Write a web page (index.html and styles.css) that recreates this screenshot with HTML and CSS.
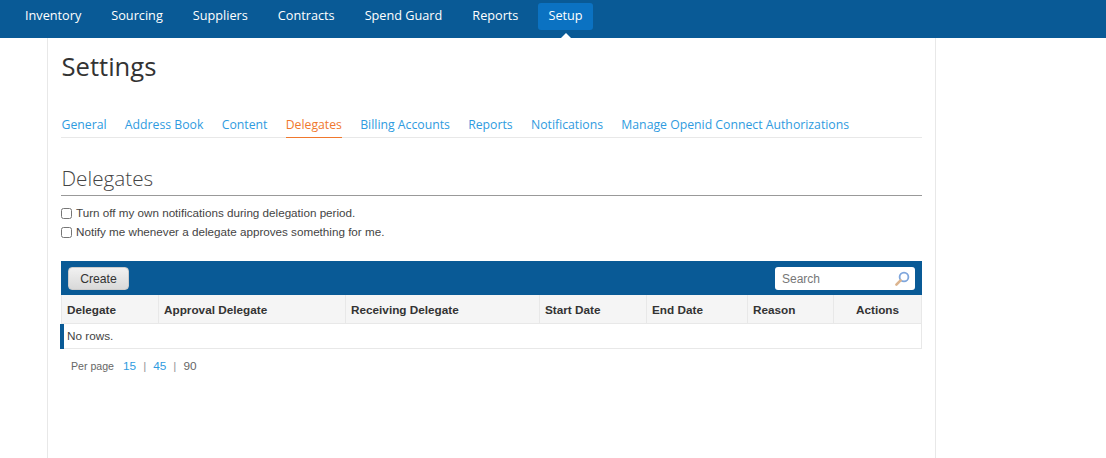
FILE: index.html
```html
<!DOCTYPE html>
<html lang="en">
<head>
<meta charset="utf-8">
<title>Settings</title>
<link rel="stylesheet" href="styles.css">
</head>
<body>
<nav class="topnav">
  <a class="topnav-item">Inventory</a>
  <a class="topnav-item">Sourcing</a>
  <a class="topnav-item">Suppliers</a>
  <a class="topnav-item">Contracts</a>
  <a class="topnav-item">Spend Guard</a>
  <a class="topnav-item">Reports</a>
  <a class="topnav-item is-active">Setup</a>
</nav>
<main class="page">
  <h1 class="page-title">Settings</h1>
  <div class="tabs">
    <a class="tab">General</a>
    <a class="tab">Address Book</a>
    <a class="tab">Content</a>
    <a class="tab is-current">Delegates</a>
    <a class="tab">Billing Accounts</a>
    <a class="tab">Reports</a>
    <a class="tab">Notifications</a>
    <a class="tab">Manage Openid Connect Authorizations</a>
  </div>
  <h2 class="section-title">Delegates</h2>
  <div class="options">
    <label class="option"><input type="checkbox" class="check">Turn off my own notifications during delegation period.</label>
    <label class="option"><input type="checkbox" class="check">Notify me whenever a delegate approves something for me.</label>
  </div>
  <div class="toolbar">
    <button class="create-btn" type="button">Create</button>
    <div class="search">
      <span class="search-text">Search</span>
      <svg class="search-icon" width="16" height="16" viewBox="0 0 16 16" aria-hidden="true">
        <circle cx="10" cy="6" r="4.4" fill="#fff" stroke="#7fa6dc" stroke-width="1.8"/>
        <path d="M6.6 9.4 2.4 13.6" stroke="#dcb48e" stroke-width="2.6" stroke-linecap="round"/>
      </svg>
    </div>
  </div>
  <table class="grid">
    <thead>
      <tr>
        <th class="c1">Delegate</th>
        <th class="c2">Approval Delegate</th>
        <th class="c3">Receiving Delegate</th>
        <th class="c4">Start Date</th>
        <th class="c5">End Date</th>
        <th class="c6">Reason</th>
        <th class="c7">Actions</th>
      </tr>
    </thead>
    <tbody>
      <tr><td class="empty" colspan="7">No rows.</td></tr>
    </tbody>
  </table>
  <div class="pager">
    <span class="pager-label">Per page</span>
    <a class="pager-link">15</a><span class="pager-sep">|</span>
    <a class="pager-link">45</a><span class="pager-sep">|</span>
    <span class="pager-now">90</span>
  </div>
</main>
</body>
</html>
```
FILE: styles.css
```css
* { box-sizing: border-box; }
html, body { margin: 0; height: 100%; overflow: hidden; }
body { background: #fff; font-family: "Liberation Sans", Arial, sans-serif; color: #333; }

.topnav {
  display: flex;
  gap: 10px;
  height: 38px;
  padding: 3px 0 0 15px;
  background: #095a96;
  align-items: flex-start;
}
.topnav-item {
  position: relative;
  height: 27px;
  padding: 0 10px;
  border-radius: 3px;
  font: 12.7px/25px "Open Sans", sans-serif;
  color: #fff;
}
.topnav-item.is-active { background: #0b72c2; }
.topnav-item.is-active::after {
  content: "";
  position: absolute;
  left: 50%;
  bottom: -8px;
  margin-left: -5px;
  border: 5px solid transparent;
  border-top-width: 0;
  border-bottom-color: #fff;
}

.page {
  width: 889px;
  height: 420px;
  margin-left: 47px;
  padding: 0 13px;
  border-left: 1px solid #e8e8e8;
  border-right: 1px solid #e8e8e8;
}
.page-title {
  margin: 0;
  padding: 11px 0 0 0.5px;
  font: 400 25.6px/36px "Open Sans", sans-serif;
  color: #333;
}
.tabs {
  display: flex;
  gap: 18.25px;
  height: 43px;
  margin-top: 10px;
  padding: 19px 0 0 0.5px;
  border-bottom: 1px solid #e8e8e8;
}
.tab {
  height: 23px;
  font: 12.26px/22px "Open Sans", sans-serif;
  color: #2f9be0;
}
.tab.is-current { color: #f0782d; border-bottom: 1px solid #f0782d; height: 24px; }

.section-title {
  margin: 24px 0 0;
  height: 34px;
  padding-left: 0.5px;
  border-bottom: 1px solid #999;
  font: 300 20.7px/32px "Open Sans", sans-serif;
  color: #444;
}
.options { margin-top: 7px; }
.option {
  display: flex;
  align-items: center;
  height: 19px;
  font-size: 11.67px;
  color: #444;
}
.check { width: 11px; height: 11px; margin: 1px 4px 0 0; }

.toolbar {
  display: flex;
  justify-content: space-between;
  align-items: center;
  height: 34px;
  margin-top: 20px;
  padding: 1px 7px 0;
  background: #095a96;
}
.create-btn {
  width: 61px;
  height: 23px;
  padding: 0;
  border: 1px solid #ccc;
  border-radius: 4px;
  background: linear-gradient(#f1f1f1, #d9d9d9);
  font: 12.2px "Liberation Sans", sans-serif;
  color: #333;
}
.search {
  display: flex;
  align-items: center;
  justify-content: space-between;
  width: 140px;
  height: 23px;
  padding: 0 5px 0 7px;
  border-radius: 3px;
  background: #fff;
}
.search-text { font-size: 12px; color: #777; }

.grid {
  width: 860px;
  border-collapse: collapse;
  table-layout: fixed;
  font-size: 11.75px;
}
.grid th {
  height: 28px;
  padding: 2px 5px 0;
  background: #f5f5f5;
  border: 1px solid #e8e8e8;
  border-top: 0;
  font-weight: 700;
  text-align: left;
  color: #333;
}
.grid th.c7 { text-align: center; }
.c1 { width: 97px; }
.c2 { width: 187px; }
.c3 { width: 194px; }
.c4 { width: 107px; }
.c5 { width: 101px; }
.c6 { width: 86px; }
.c7 { width: 88px; }
.grid .empty {
  position: relative;
  height: 25px;
  padding: 0 5px;
  border: 1px solid #e8e8e8;
  border-top: 0;
  color: #444;
}
.grid .empty::before {
  content: "";
  position: absolute;
  left: -2px;
  top: 0;
  bottom: -1px;
  width: 4px;
  background: #095a96;
}

.pager {
  display: flex;
  align-items: center;
  height: 18px;
  margin-top: 8px;
  padding-left: 10px;
  font-size: 11.8px;
  color: #666;
}
.pager-label { font-size: 10.6px; margin-right: 9px; }
.pager-link { color: #2f9be0; }
.pager-sep { margin: 0 7px; color: #999; }
.pager-now { color: #666; }
```
